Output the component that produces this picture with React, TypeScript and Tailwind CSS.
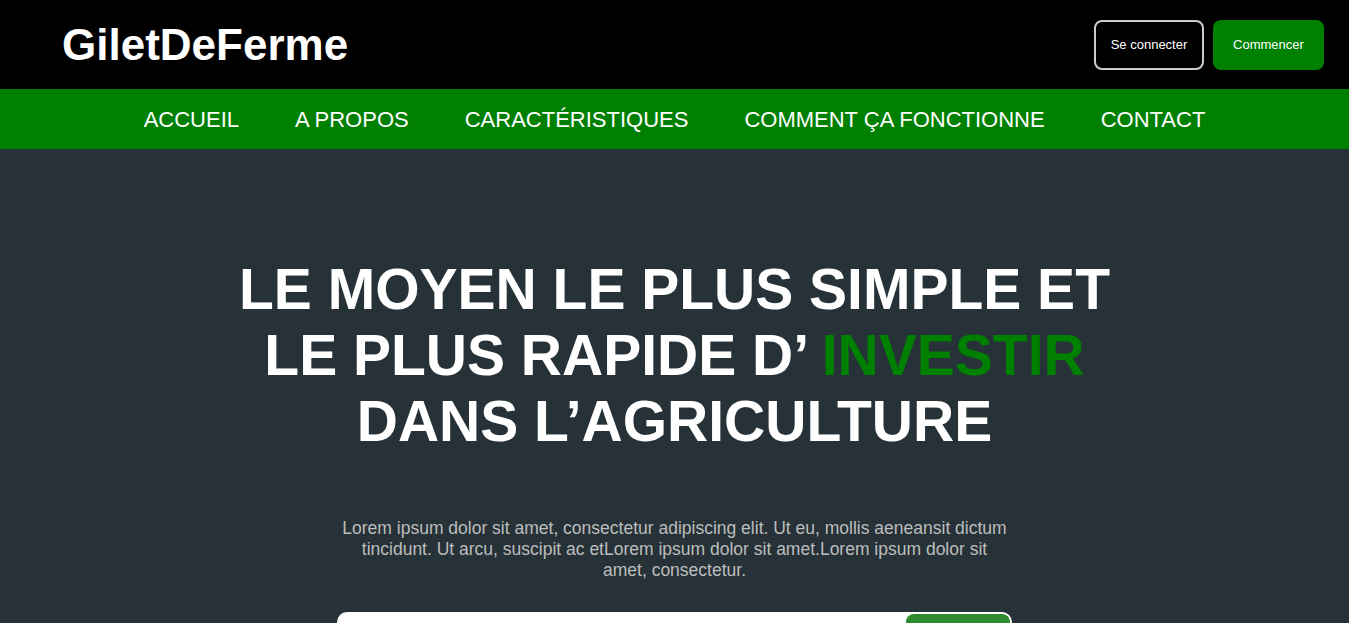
import React from 'react';

const navLinks = ['Accueil', 'A propos', 'Caractéristiques', 'Comment ça fonctionne', 'Contact'];

const App = () => {
  return (
    <div className="min-h-screen bg-[#263238] font-['Liberation_Sans',Arial,sans-serif]">
      {/* top bar */}
      <header className="h-[89px] bg-black flex items-center justify-between pl-[62px] pr-[25px]">
        <h1 className="text-[44px] font-bold text-white leading-none">GiletDeFerme</h1>
        <div className="flex gap-[9px]">
          <button className="w-[110px] h-[50px] rounded-lg border-2 border-[#cccccc] text-white text-[13px]">
            Se connecter
          </button>
          <button className="w-[111px] h-[50px] rounded-lg bg-[#008000] text-white text-[13px]">
            Commencer
          </button>
        </div>
      </header>

      <nav className="h-[60px] bg-[#008000] flex items-center justify-center gap-[56px]">
        {navLinks.map((link) => (
          <a key={link} href="#" className="text-white text-[22px] uppercase">
            {link}
          </a>
        ))}
      </nav>

      {/* hero */}
      <section className="pt-[107px] flex flex-col items-center text-center">
        <h2 className="text-[57px] leading-[66px] font-bold text-white uppercase">
          Le moyen le plus simple et
          <br />
          le plus rapide d’ <span className="text-[#008000]">investir</span>
          <br />
          dans l’agriculture
        </h2>
        <p className="mt-[64px] w-[672px] text-[17.5px] leading-[21px] text-[#bdbdbd]">
          Lorem ipsum dolor sit amet, consectetur adipiscing elit. Ut eu, mollis aeneansit dictum tincidunt. Ut arcu,
          suscipit ac etLorem ipsum dolor sit amet.Lorem ipsum dolor sit amet, consectetur.
        </p>
        {/* email signup, mostly below the fold */}
        <div className="mt-[31px] w-[675px] h-[64px] bg-white rounded-[10px] p-[2px] flex justify-end">
          <button aria-label="S'inscrire" className="w-[104px] h-full rounded-lg bg-[#2e8b2e]"></button>
        </div>
      </section>
    </div>
  );
};

export default App;
